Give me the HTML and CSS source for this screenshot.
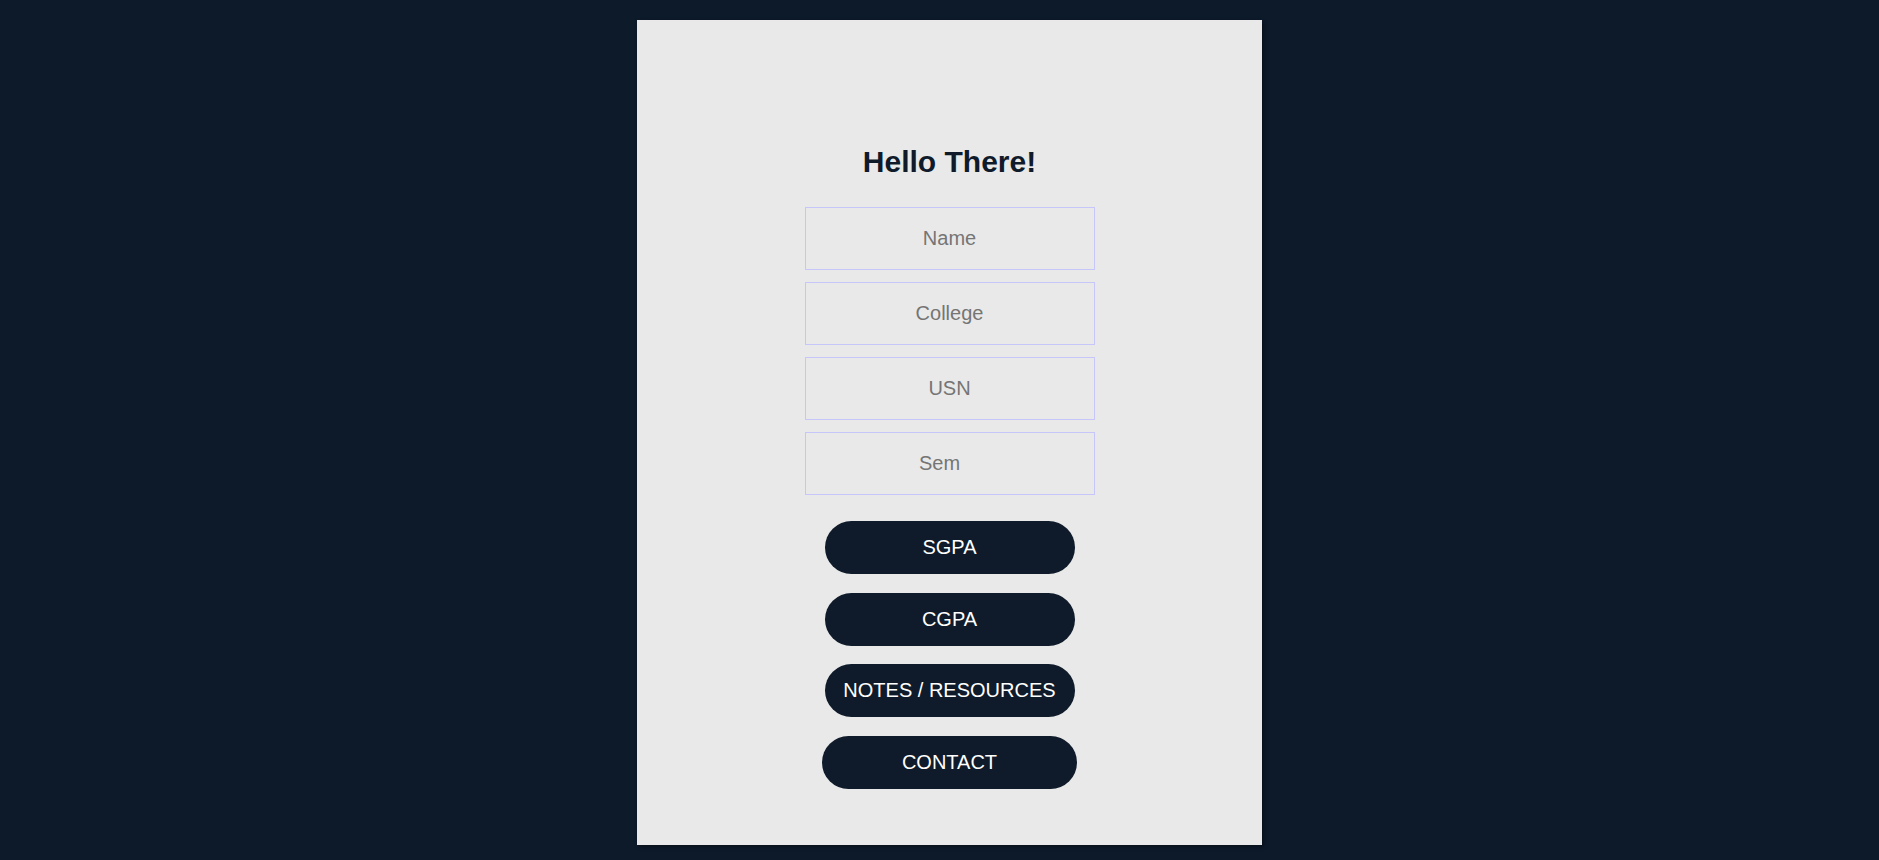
FILE: index.html
```html
<!DOCTYPE html>
<html lang="en">
<head>
<meta charset="utf-8">
<title>Hello There!</title>
<link rel="stylesheet" href="styles.css">
</head>
<body>
<div class="page">
  <main class="card">
    <h1 class="title">Hello There!</h1>
    <form class="form">
      <input class="field" type="text" placeholder="Name">
      <input class="field" type="text" placeholder="College">
      <input class="field" type="text" placeholder="USN">
      <input class="field field-number" type="number" placeholder="Sem">
    </form>
    <div class="actions">
      <button class="btn" type="button">SGPA</button>
      <button class="btn" type="button">CGPA</button>
      <button class="btn" type="button">NOTES / RESOURCES</button>
      <button class="btn btn-wide" type="button">CONTACT</button>
    </div>
  </main>
</div>
</body>
</html>
```

FILE: styles.css
```css
html, body {
  margin: 0;
  padding: 0;
  background: #0d1a2a;
  height: 100%;
}

body {
  font-family: "Liberation Sans", Arial, sans-serif;
}

.page {
  display: flex;
  justify-content: center;
  padding: 20px 0 0 20px;
  box-sizing: border-box;
}

.card {
  width: 625px;
  height: 825px;
  box-sizing: border-box;
  background: #e9e9e9;
  box-shadow: 2px 2px 4px rgba(0, 0, 0, 0.35);
  display: flex;
  flex-direction: column;
  align-items: center;
  padding-top: 125px;
}

.title {
  margin: 0 0 28px;
  font-size: 30px;
  line-height: 34px;
  font-weight: bold;
  color: #0f1b2a;
}

.form {
  display: flex;
  flex-direction: column;
  align-items: center;
  gap: 12px;
}

.field {
  width: 290px;
  height: 63px;
  box-sizing: border-box;
  border: 1px solid #c6c6fa;
  background: transparent;
  font-family: "Liberation Sans", Arial, sans-serif;
  font-size: 20px;
  text-align: center;
  color: #333;
  outline: none;
  padding: 0 2px;
  margin: 0;
}

.field-number {
  padding-right: 7px;
}

.field::placeholder {
  color: #757575;
}

.actions {
  margin-top: 26px;
  display: flex;
  flex-direction: column;
  align-items: center;
  gap: 18.7px;
}

.btn {
  width: 250px;
  height: 53px;
  border: none;
  border-radius: 27px;
  background: #0f1b2a;
  color: #ffffff;
  font-family: "Liberation Sans", Arial, sans-serif;
  font-size: 20px;
  padding: 0;
  cursor: pointer;
}

.btn-wide {
  width: 255px;
}
```
